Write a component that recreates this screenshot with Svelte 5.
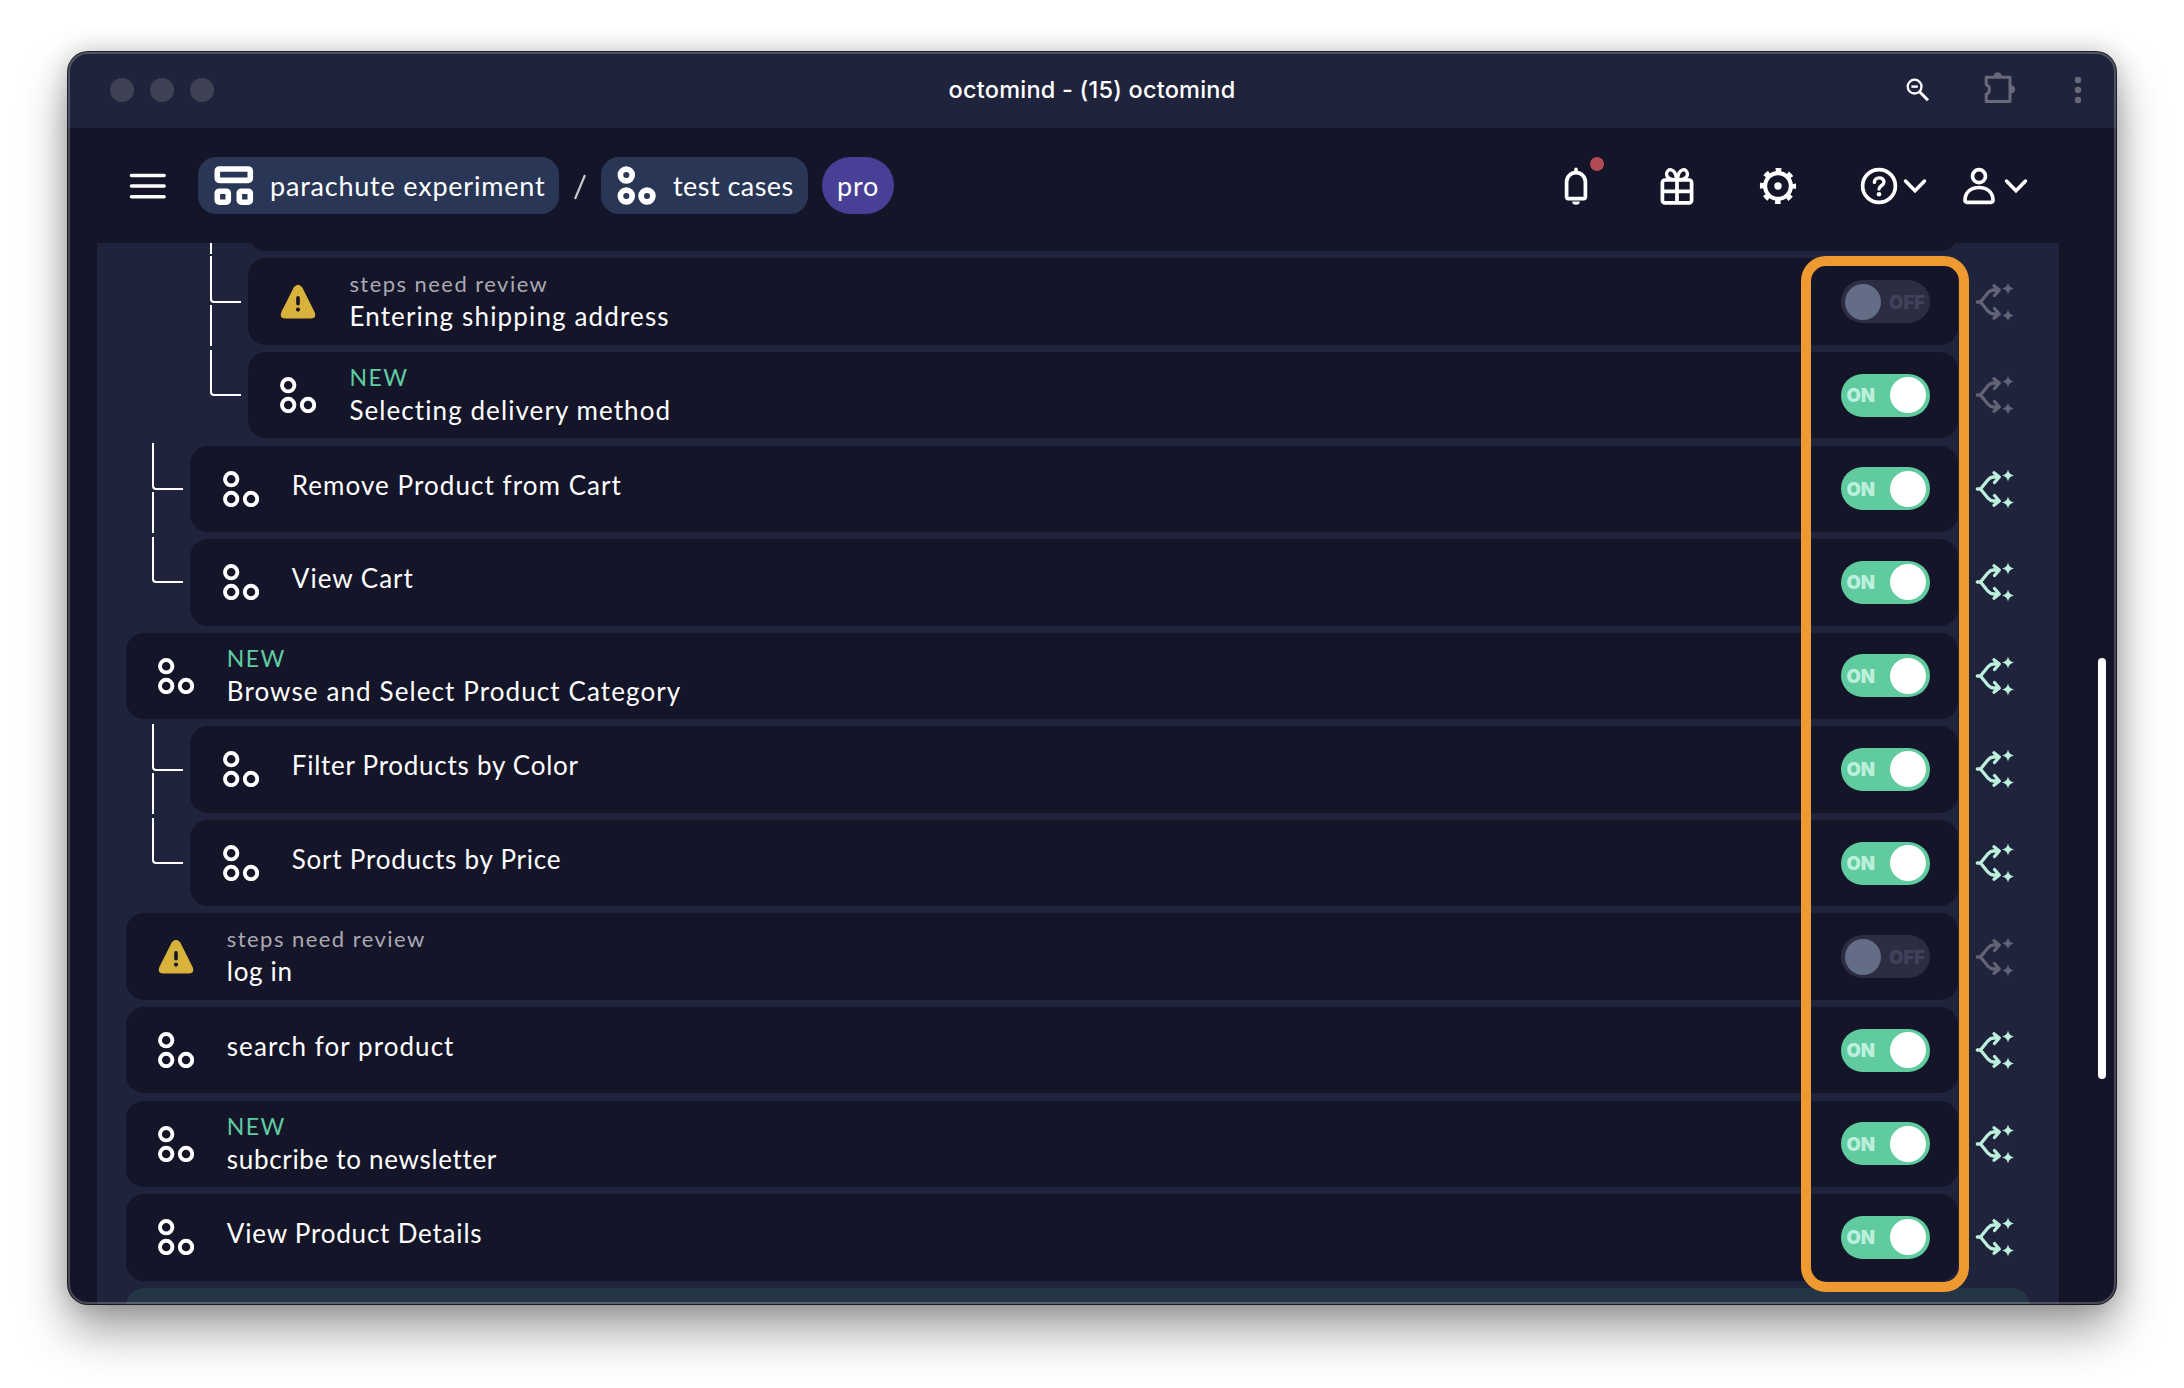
<script>
  // tracking: letter-spacing of the title in px
  const rows = [
    { level: 2, note: 'review', title: 'Entering shipping address', tracking: 1.15, on: false, branch: false, more: true },
    { level: 2, note: 'new', title: 'Selecting delivery method', tracking: 1.08, on: true, branch: false },
    { level: 1, title: 'Remove Product from Cart', tracking: 1.06, on: true, branch: true, more: true },
    { level: 1, title: 'View Cart', tracking: 1, on: true, branch: true },
    { level: 0, note: 'new', title: 'Browse and Select Product Category', tracking: 1.1, on: true, branch: true },
    { level: 1, title: 'Filter Products by Color', tracking: 0.74, on: true, branch: true, more: true },
    { level: 1, title: 'Sort Products by Price', tracking: 0.77, on: true, branch: true },
    { level: 0, note: 'review', title: 'log in', tracking: 0.7, on: false, branch: false },
    { level: 0, title: 'search for product', tracking: 1.07, on: true, branch: true },
    { level: 0, note: 'new', title: 'subcribe to newsletter', tracking: 0.68, on: true, branch: true },
    { level: 0, title: 'View Product Details', tracking: 0.8, on: true, branch: true }
  ];
</script>

<div class="desktop">
<div class="window">
  <div class="titlebar">
    <div class="lights"><i></i><i></i><i></i></div>
    <div class="wtitle">octomind - (15) octomind</div>
    <div class="tools">
      <svg class="mag" width="24" height="24" viewBox="0 0 24 24" fill="none" stroke="#fff" stroke-width="2.3">
        <circle cx="8.6" cy="8.6" r="6.9" /><path d="M5.4 8.6h6.4" stroke-width="2.4" /><path d="M13.6 13.8l8.4 8.4" stroke-width="3" />
      </svg>
      <svg class="puz" width="34" height="34" viewBox="0 0 34 34">
        <path d="M3.2 6.2H27V30.5H3.2V23.2a5.2 5.2 0 0 0 0-9.6Z" fill="none" stroke="#686a7a" stroke-width="3" stroke-linejoin="round" />
        <path d="M10.5 5.5a4.2 4.2 0 0 1 8.4 0ZM28 14.2a4.2 4.2 0 0 1 0 8.4Z" fill="#686a7a" />
      </svg>
      <svg width="8" height="28" viewBox="0 0 8 28" fill="#686a7a"><circle cx="4" cy="4" r="3.2" /><circle cx="4" cy="14" r="3.2" /><circle cx="4" cy="24" r="3.2" /></svg>
    </div>
  </div>

  <div class="header">
    <svg class="burger" width="38" height="28" viewBox="0 0 38 28" stroke="#fff" stroke-width="3.6" stroke-linecap="round"><path d="M2.5 3.5h32.6M2.5 14h32.6M2.5 24.7h32.6" /></svg>
    <div class="chip project">
      <svg width="40" height="40" viewBox="0 0 40 40" fill="none" stroke="#fff" stroke-width="5.6">
        <rect x="3.3" y="3" width="33" height="11.4" rx="2" /><rect x="3.3" y="25.2" width="11" height="11" rx="2" /><rect x="25.3" y="25.2" width="11" height="11" rx="2" />
      </svg>
      <span>parachute experiment</span>
    </div>
    <svg class="slash" width="14" height="28" viewBox="0 0 14 28"><path d="M2 26L12 2" stroke="#c6c6cc" stroke-width="2.2" /></svg>
    <div class="chip cases">
      <svg width="40" height="40" viewBox="0 0 40 40" fill="none" stroke="#fff" stroke-width="5.7">
        <circle cx="9.3" cy="9" r="5.9" /><circle cx="9.3" cy="30" r="5.9" /><circle cx="30" cy="30" r="5.9" />
      </svg>
      <span>test cases</span>
    </div>
    <div class="pro">pro</div>
    <div class="actions">
      <div class="bell">
        <svg width="26" height="40" viewBox="0 0 26 40">
          <path d="M3.6 31V16a9.4 9.4 0 0 1 18.8 0V31a1.6 1.6 0 0 1-1.6 1.6H5.2A1.6 1.6 0 0 1 3.6 31Z" fill="none" stroke="#fff" stroke-width="3.7" />
          <path d="M11.2 7V3.4a1.8 1.8 0 0 1 3.6 0V7ZM9.2 35.6h7.6a3.8 3.2 0 0 1-7.6 0Z" fill="#fff" />
        </svg>
        <b></b>
      </div>
      <svg class="gift" width="36" height="40" viewBox="0 0 36 40" fill="none" stroke="#fff" stroke-width="3.7">
        <rect x="3.4" y="14" width="29.2" height="22.8" rx="2.5" /><path d="M3.4 25.3h29.2M18 13v23" /><path d="M17.4 13C14 14.500 7.600 12.500 7.600 8.500C7.600 1.500 16.500 1.500 17.400 13ZM18.600 13C22 14.500 28.400 12.500 28.400 8.500C28.400 1.500 19.500 1.500 18.600 13Z" stroke-width="3.3" />
      </svg>
      <svg class="gear" width="40" height="40" viewBox="0 0 40 40">
        <circle cx="20" cy="20" r="12.9" fill="none" stroke="#fff" stroke-width="4.2" />
        <circle cx="20" cy="20" r="15.9" fill="none" stroke="#fff" stroke-width="4.4" stroke-dasharray="5.6 6.887" stroke-dashoffset="2.8" />
        <circle cx="20" cy="20" r="3.7" fill="#fff" />
      </svg>
      <div class="menu">
        <svg width="40" height="40" viewBox="0 0 40 40" fill="none" stroke="#fff" stroke-width="3.7">
          <circle cx="20" cy="20" r="16.4" /><path d="M15.400 16.400c0-6 9.600-6 9.600-.400c0 3.800-5 3.600-5 7" stroke-width="3.4" stroke-linecap="round" /><circle cx="20" cy="28.300" r="2.300" fill="#fff" stroke="none" />
        </svg>
        <svg width="26" height="20" viewBox="0 0 26 20" fill="none" stroke="#fff" stroke-width="3.5" stroke-linecap="round"><path d="M3.500 5l9.500 9.800L22.500 5" /></svg>
      </div>
      <div class="menu person">
        <svg width="36" height="40" viewBox="0 0 36 40" fill="none" stroke="#fff" stroke-width="3.7">
          <circle cx="18" cy="10.200" r="6.500" /><path d="M4 34.500c0-8 5.500-13 14-13s14 5 14 13a1.800 1.800 0 0 1-1.800 1.800H5.800a1.800 1.800 0 0 1-1.800-1.800Z" />
        </svg>
        <svg width="26" height="20" viewBox="0 0 26 20" fill="none" stroke="#fff" stroke-width="3.5" stroke-linecap="round"><path d="M3.500 5l9.500 9.800L22.500 5" /></svg>
      </div>
    </div>
  </div>

  <div class="body">
    <div class="panel">
      <div class="row previous level2">
        <div class="guides"><span class="stem"></span></div>
        <div class="card"></div>
      </div>
      {#each rows as row}
        <div class="row level{row.level}">
          {#if row.level}
            <div class="guides">
              <span class="elbow"></span>
              {#if row.more}<span class="stem"></span>{/if}
            </div>
          {/if}
          <div class="card">
            {#if row.note === 'review'}
              <svg class="kind" width="36" height="36" viewBox="0 0 36 36">
                <path d="M13.700 3.600Q18-2.300 22.300 3.600L34.600 28Q37 34.500 30.500 34.600H5.500Q-1 34.500 1.400 28Z" fill="#d9b23c" />
                <path d="M18 13.700v6" stroke="#151529" stroke-width="3.6" stroke-linecap="round" /><circle cx="18" cy="25.600" r="2.100" fill="#151529" />
              </svg>
            {:else}
              <svg class="kind" width="36" height="36" viewBox="0 0 36 36" fill="none" stroke="#fff" stroke-width="3.9">
                <circle cx="8.200" cy="8.200" r="6.200" /><circle cx="8.200" cy="28" r="6.200" /><circle cx="28" cy="28" r="6.200" />
              </svg>
            {/if}
            <div class="text" class:noted={row.note}>
              {#if row.note === 'review'}<div class="note review">steps need review</div>{/if}
              {#if row.note === 'new'}<div class="note new">NEW</div>{/if}
              <div class="title" style="letter-spacing: {row.tracking}px">{row.title}</div>
            </div>
            <div class="toggle" class:on={row.on}>
              {#if row.on}<span>ON</span><i></i>{:else}<i></i><span>OFF</span>{/if}
            </div>
          </div>
          <svg class="branch" class:active={row.branch} width="40" height="40" viewBox="0 0 40 40">
            <g fill="none" stroke="currentColor" stroke-width="3.3" stroke-linecap="round" stroke-linejoin="round">
              <path d="M2.300 20H5.500L13 10.800Q15.500 8 18.500 8H24M19 3.700L24.300 8L19.500 13.500" />
              <path d="M5.500 20L13 29.200Q15.500 32 18.500 32H24M19.500 26.500L24.300 32L19 36.300" />
            </g>
            <g fill="currentColor">
              <path d="M33 .500Q33.900 5.500 39 6.500Q33.900 7.500 33 12.500Q32.100 7.500 27 6.500Q32.100 5.500 33 .500Z" />
              <path d="M33 27.500Q33.900 32.500 39 33.500Q33.900 34.500 33 39.500Q32.100 34.500 27 33.500Q32.100 32.500 33 27.500Z" />
            </g>
          </svg>
        </div>
      {/each}
      <div class="next"></div>
    </div>
    <div class="scroll"></div>
  </div>
  <div class="rim"></div>
  <div class="highlight"></div>
</div>
</div>

<style>
  :global(body) { background: #fff; }
  .desktop { box-sizing: border-box; width: 2184px; height: 1388px; padding: 52px 0 0 68px; overflow: hidden; background: #fff; }
  .window {
    box-sizing: border-box; position: relative; width: 2048px; height: 1252px;
    border-radius: 20px; background: #151529; color: #fff; font-family: Lato, sans-serif;
    display: flex; flex-direction: column;
    box-shadow: 0 0 0 1px rgba(0, 0, 0, .85), 0 26px 48px rgba(0, 0, 0, .38), 0 0 26px rgba(0, 0, 0, .2);
  }
  svg { display: block; flex: none; }
  .titlebar { height: 76px; flex: none; background: #1f233b; border-radius: 20px 20px 0 0; display: grid; grid-template-columns: 1fr auto 1fr; align-items: center; }
  .lights { display: flex; gap: 16px; padding-left: 42px; }
  .lights i { width: 24px; height: 24px; border-radius: 50%; background: #3e4154; }
  .wtitle { font: 500 23.5px/30px Inter, sans-serif; letter-spacing: .22px; white-space: nowrap; }
  .tools { display: flex; align-items: center; justify-content: flex-end; padding-right: 34px; }
  .mag { margin-right: 53px; }
  .puz { margin: -4px 57px 0 0; }
  .header { height: 115px; flex: none; display: flex; align-items: center; }
  .burger { margin-left: 61px; }
  .chip { box-sizing: border-box; height: 57px; border-radius: 18px; background: #2a3655; display: flex; align-items: center; padding-left: 16px; gap: 16px; font-size: 27px; white-space: nowrap; letter-spacing: .79px; }
  .project { width: 361px; margin-left: 31px; }
  .slash { margin: 2px 14px 0; }
  .cases { width: 207px; letter-spacing: .46px; }
  .pro { width: 72px; height: 57px; border-radius: 29px; margin-left: 14px; background: #474096; font-size: 27px; line-height: 57px; text-align: center; letter-spacing: .7px; }
  .actions { margin-left: auto; display: flex; align-items: center; padding-right: 87px; }
  .bell { position: relative; margin-right: 70px; }
  .bell b { position: absolute; left: 27px; top: -9px; width: 14px; height: 14px; border-radius: 50%; background: #b04a55; }
  .gift { margin-right: 63px; }
  .gear { margin-right: 61px; }
  .menu { display: flex; align-items: center; gap: 3px; }
  .person { margin-left: 33px; gap: 6px; }
  .body { flex: 1; min-height: 0; display: flex; align-items: flex-start; overflow: hidden; border-radius: 0 0 20px 20px; }
  .panel { box-sizing: border-box; width: 1962px; height: 1061px; margin-left: 29px; padding-left: 29px; overflow: hidden; background: #1f233b; display: flex; flex-direction: column; gap: 7.2px; }
  .row { height: 86.4px; flex: none; display: flex; align-items: center; }
  .previous { margin-top: -78.2px; }
  .card { flex: none; box-sizing: border-box; height: 100%; width: 1832px; border-radius: 18px; background: #151529; display: flex; align-items: center; padding: 0 28px 0 31.8px; }
  .level1 .card { width: 1768px; padding-left: 32.8px; }
  .level2 .card { width: 1710px; padding-left: 32.4px; }
  .guides { align-self: flex-start; flex: none; box-sizing: border-box; display: flex; flex-direction: column; gap: 2.5px; margin-top: -2.2px; padding-left: 26px; width: 64px; height: 91px; }
  .level2 .guides { padding-left: 84px; width: 122px; }
  .previous .guides { justify-content: flex-end; }
  .elbow { box-sizing: border-box; width: 30.5px; height: 46.5px; border: solid #fff; border-width: 0 0 2px 2px; border-bottom-left-radius: 4px; }
  .stem { width: 2px; height: 41px; background: #fff; }
  .kind { margin-right: 33px; }
  .text { flex: 1; display: flex; flex-direction: column; justify-content: center; white-space: nowrap; padding-bottom: 8px; }
  .text.noted { padding-bottom: 1.5px; }
  .note { font-size: 22px; line-height: 31px; letter-spacing: 1.45px; }
  .review { color: #a9a9b2; }
  .new { color: #5fcda0; font-size: 23px; }
  .title { font-size: 26px; line-height: 34px; }
  .toggle { box-sizing: border-box; width: 89px; height: 43px; border-radius: 22px; padding: 0 5px 0 4px; display: flex; align-items: center; justify-content: space-between; background: #2c2c43; color: #41415a; font: 900 18.5px/24px Inter, sans-serif; }
  .toggle i { width: 36px; height: 36px; border-radius: 50%; background: #646d86; }
  .toggle.on { background: #5fcb9f; color: #bdf0dc; padding: 0 4px 0 5.5px; }
  .toggle.on i { background: #fff; }
  .branch { margin-left: 17px; color: #626375; }
  .branch.active { color: #bdf0dc; }
  .next { flex: none; height: 86px; width: 1904px; border-radius: 18px; background: #243645; }
  .scroll { width: 8px; height: 421px; border-radius: 4px; background: #fff; margin: 415px 0 0 39px; }
  .rim { position: absolute; box-sizing: border-box; inset: 0; border-radius: 20px; border: 2px solid rgba(255, 255, 255, .22); pointer-events: none; }
  .highlight { position: absolute; box-sizing: border-box; left: 1733px; top: 204px; width: 168px; height: 1036px; border: 10px solid #ee9a30; border-radius: 25px; }
</style>
